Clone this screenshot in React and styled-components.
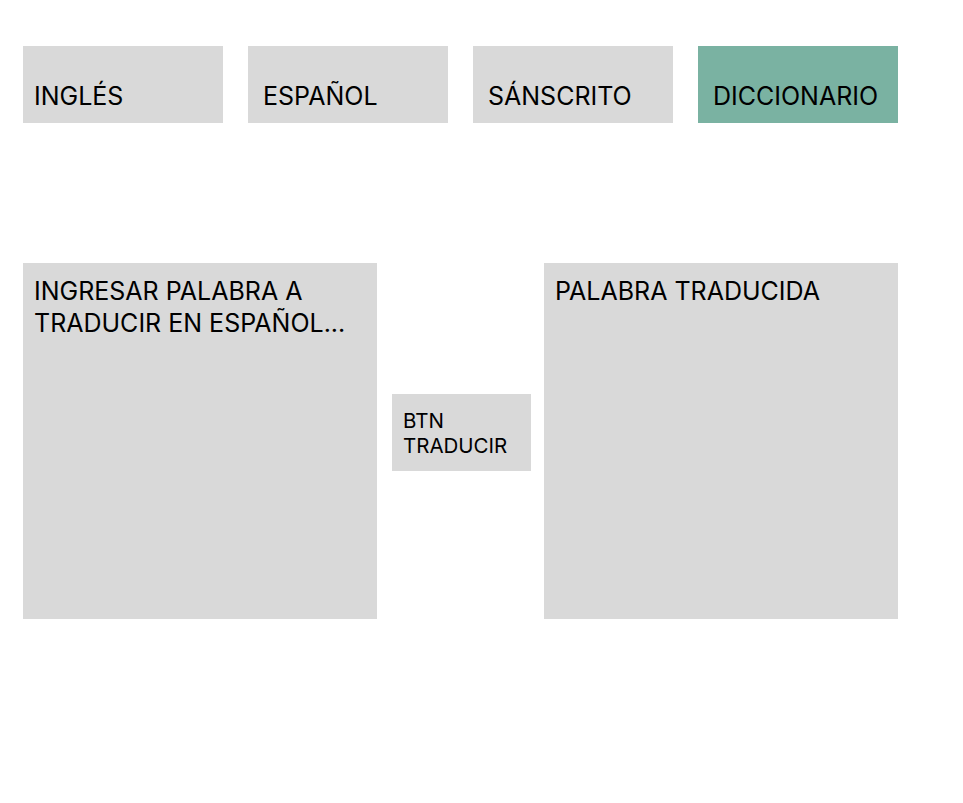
import React from "react";
import styled, {createGlobalStyle} from "styled-components";

const GlobalStyle = createGlobalStyle`
    body {
        margin: 0;
        background: #ffffff;
        font-family: "Inter", "Liberation Sans", sans-serif;
        color: #000000;
    }
`;

const Page = styled.div`
    width: 875px;
    padding: 46px 0 0 23px;
`;

const Tabs = styled.nav`
    display: flex;
    gap: 25px;
`;

const Tab = styled.div`
    width: 200px;
    height: 77px;
    box-sizing: border-box;
    padding: 35px ${props => (props.first ? "11px" : "15px")} 0;
    background: ${props => (props.active ? "#7ab2a2" : "#d9d9d9")};
    font-size: 25px;
    line-height: 30px;
`;

const Workspace = styled.div`
    display: flex;
    margin-top: 140px;
`;

const Panel = styled.div`
    width: 354px;
    height: 356px;
    box-sizing: border-box;
    padding: 12px 11px;
    background: #d9d9d9;
    font-size: 25px;
    line-height: 32px;
`;

const TranslateBtn = styled.button`
    display: block;
    align-self: flex-start;
    width: 139px;
    height: 77px;
    margin: 131px 13px 0 15px;
    padding: 14px 11px 0;
    box-sizing: border-box;
    border: none;
    background: #d9d9d9;
    font-family: inherit;
    font-size: 20.5px;
    line-height: 25px;
    text-align: left;
    color: #000000;
    cursor: pointer;
`;

const BtnInner = styled.div`
    height: 100%;
`;

const tabs = ["INGLÉS", "ESPAÑOL", "SÁNSCRITO", "DICCIONARIO"];

const App = () => {
    return (
        <Page>
            <GlobalStyle />
            <Tabs>
                {tabs.map((t, idx) => (
                    <Tab key={t} first={idx === 0} active={t === "DICCIONARIO"}>
                        {t}
                    </Tab>
                ))}
            </Tabs>
            <Workspace>
                <Panel>INGRESAR PALABRA A TRADUCIR EN ESPAÑOL...</Panel>
                <TranslateBtn type="button">
                    <BtnInner>
                        BTN
                        <br />
                        TRADUCIR
                    </BtnInner>
                </TranslateBtn>
                <Panel>PALABRA TRADUCIDA</Panel>
            </Workspace>
        </Page>
    );
};

export default App;
